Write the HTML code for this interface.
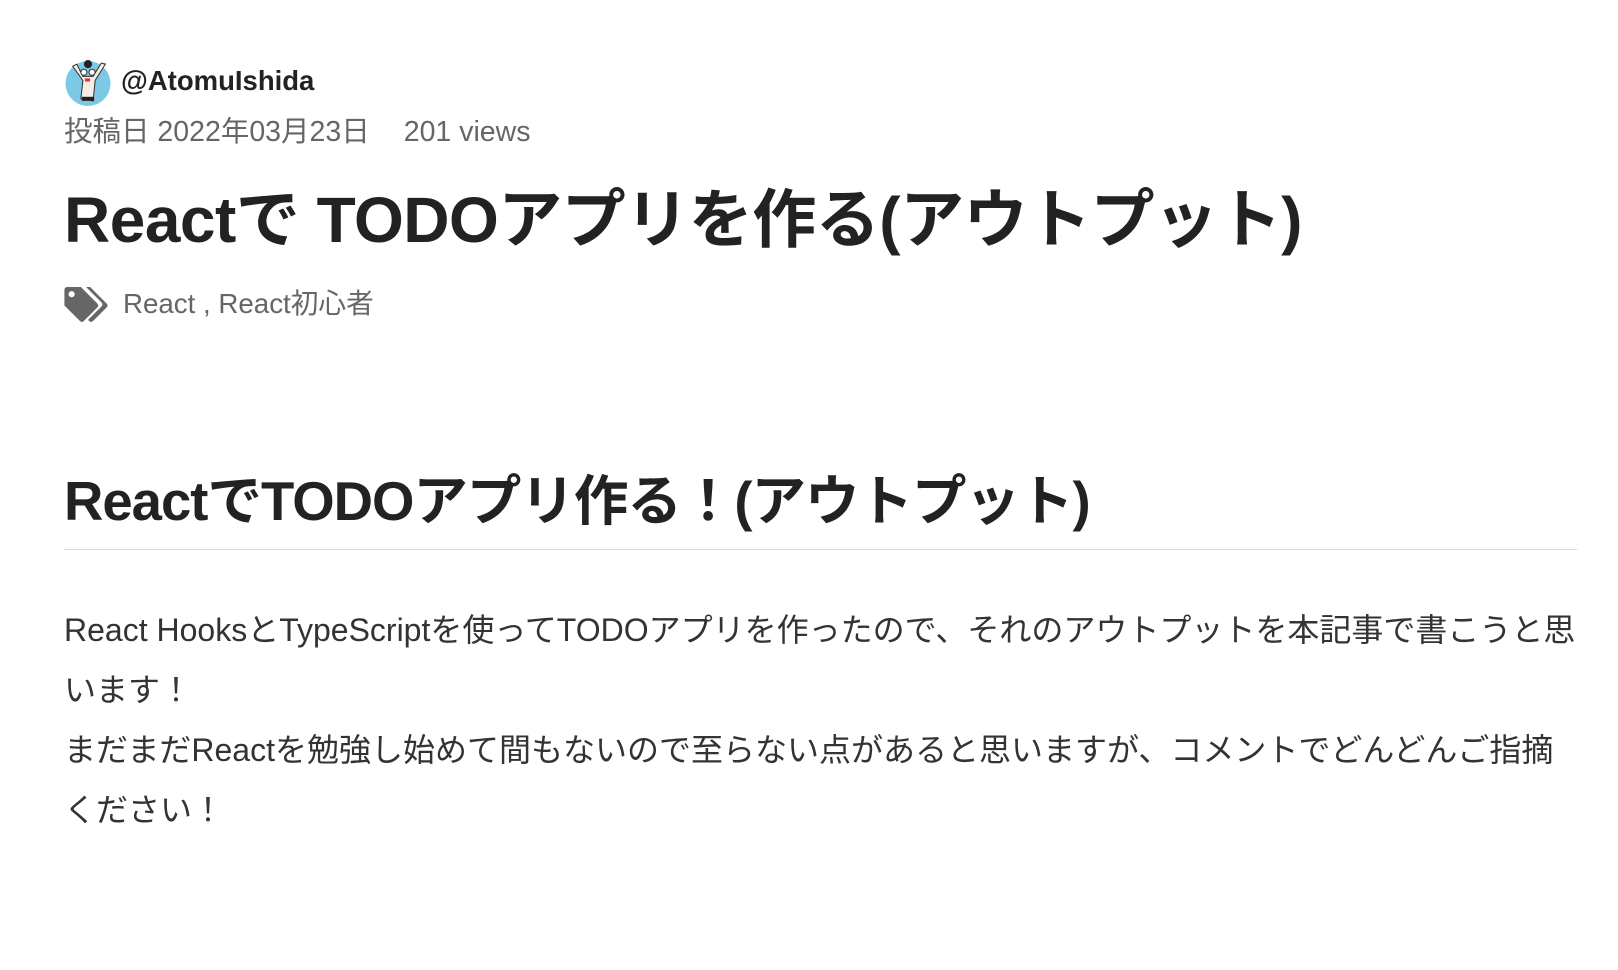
<!DOCTYPE html>
<html><head><meta charset="utf-8"><style>
body{margin:0;background:#fff;width:1618px;height:970px;overflow:hidden;font-family:"Liberation Sans","Noto Sans CJK JP",sans-serif;color:#222}
.a{position:absolute;left:64px;white-space:nowrap}
</style></head><body>
<svg class="a" style="top:58px" width="48" height="49" viewBox="0 0 46 48">
<circle cx="23" cy="25" r="22" fill="#7cc9e6"/>
<path d="M8 8 L18 22 L16 40 L28 42 L30 22 L40 6 L36 5 L28 18 L18 18 L12 6Z" fill="#f6eee4" stroke="#333" stroke-width="1"/>
<circle cx="23" cy="6" r="4" fill="#222"/>
<circle cx="19" cy="14" r="3" fill="#fff" stroke="#333"/><circle cx="27" cy="14" r="3" fill="#fff" stroke="#333"/>
<rect x="20" y="20" width="5" height="3" fill="#d33"/><rect x="17" y="38" width="12" height="4" fill="#222"/>
</svg>
<div class="a" style="left:121px;top:65px;font-size:27.5px;font-weight:bold;line-height:32px">@AtomuIshida</div>
<div class="a" style="top:115px;font-size:28.5px;color:#666;line-height:34px">投稿日 2022年03月23日<span style="display:inline-block;width:34px"></span>201 views</div>
<div class="a" style="top:184px;font-size:64px;font-weight:bold;line-height:72px;letter-spacing:-0.5px">Reactで TODOアプリを作る(アウトプット)</div>
<svg class="a" style="top:287px" width="44" height="37" viewBox="0 0 42 36">
<path d="M0 3 Q0 0 3 0 H16 L32 16 Q34 18 32 20 L19 33 Q17 35 15 33 L0 18Z" fill="#666"/>
<circle cx="7" cy="7" r="3" fill="#fff"/>
<path d="M21 0 H25 L41 16 Q43 18 41 20 L28 33 Q26 35 24 33 L23 32 L36 19 Q38 17 36 15Z" fill="#666"/>
</svg>
<div class="a" style="left:123px;top:287px;font-size:27.7px;color:#666;line-height:34px">React , React初心者</div>
<div class="a" style="top:470px;font-size:54.5px;font-weight:bold;line-height:64px;color:#222;letter-spacing:-1px">ReactでTODOアプリ作る！(アウトプット)</div>
<div style="position:absolute;left:64px;top:549px;width:1513px;height:1px;background:#d8d8d8"></div>
<div class="a" style="top:600px;font-size:32px;line-height:60px;color:#333">React HooksとTypeScriptを使ってTODOアプリを作ったので、それのアウトプットを本記事で書こうと思<br>います！<br>まだまだReactを勉強し始めて間もないので至らない点があると思いますが、コメントでどんどんご指摘<br>ください！</div>
</body></html>
